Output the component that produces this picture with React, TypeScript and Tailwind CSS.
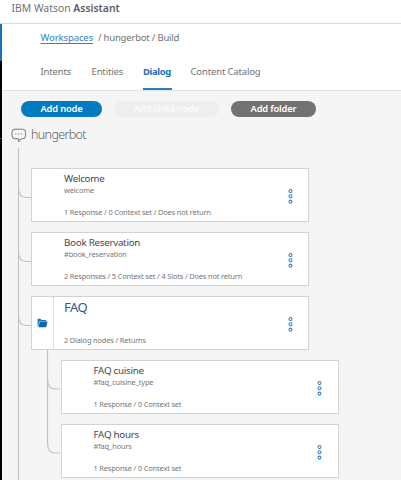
import React from "react";

type NodeProps = {
  title: string;
  condition?: string;
  meta: string;
  folder?: boolean;
};

function Menu() {
  return (
    <svg width="7" height="17" viewBox="0 0 7 17" fill="none" stroke="#3584c4" strokeWidth="1.05">
      <circle cx="3.5" cy="3" r="1.5" />
      <circle cx="3.5" cy="8.3" r="1.5" />
      <circle cx="3.5" cy="13.6" r="1.5" />
    </svg>
  );
}

function FolderIcon() {
  return (
    <svg width="11" height="10" viewBox="0 0 11 10">
      <path d="M.6 8.6V.7h3l.9 1.3h4.7v1.2H2.6L1.1 8.6Z" fill="#1c75b5" />
      <path d="M3 3.6h7.5L9.2 9.3H1.3Z" fill="#0f67ac" />
    </svg>
  );
}

function ChatIcon() {
  return (
    <svg width="16" height="16" viewBox="0 0 16 16" fill="none" stroke="#686868" strokeWidth="0.9">
      <path d="M4 1.2h7.6a3 3 0 0 1 3 3v3.6a3 3 0 0 1-3 3H10.2L7.8 13.8V10.8H4a3 3 0 0 1-3-3V4.2a3 3 0 0 1 3-3Z" />
      <path d="M4.4 6h1M7.3 6h1M10.2 6h1" strokeWidth="1.1" />
    </svg>
  );
}

function NodeCard({ title, condition, meta, folder }: NodeProps) {
  return (
    <div className="flex h-[54px] w-[278px] shrink-0 border border-[#d3d3d3] bg-white">
      <div className={`flex w-[22px] shrink-0 items-center justify-center ${folder ? "border-r border-[#dedede]" : ""}`}>
        {folder && <FolderIcon />}
      </div>
      <div className="flex flex-1 flex-col pl-[10px] whitespace-nowrap">
        {folder ? (
          <div className="mt-[3px] h-[27px] text-[13px] leading-[14px] tracking-[-0.5px] text-[#2c5a89]">{title}</div>
        ) : (
          <>
            <div className="mt-[3px] h-[12px] text-[9.8px] leading-[13px] tracking-[-0.27px] text-[#484848]">{title}</div>
            <div className="mt-px h-[14px] text-[7.4px] leading-[10px] tracking-[-0.12px] text-[#777]">{condition}</div>
          </>
        )}
        <div className="mt-[8px] text-[7.4px] leading-[10px] tracking-[-0.15px] text-[#757575]">{meta}</div>
      </div>
      <div className="mr-[14.5px] flex w-[7px] items-center pt-[2px]">
        <Menu />
      </div>
    </div>
  );
}

export default function App() {
  return (
    <div className="flex h-[480px] w-[401px] flex-col overflow-hidden bg-[#f5f5f5] font-['Noto_Sans',sans-serif] text-[#727272]">
      <header className="flex h-[24px] shrink-0 items-start border-b border-[#dcdcdc] bg-white pt-[2px] pl-[11.5px] text-[10.4px] leading-[13px] whitespace-nowrap">
        <span>IBM Watson&nbsp;</span>
        <span className="font-semibold text-[#5c5c5c]">Assistant</span>
      </header>
      <div className="flex min-h-0 flex-1">
        <div className="w-[1.5px] shrink-0 bg-black">
          <div className="h-[37px] bg-[#1870b8]" />
          <div className="mt-[77px] h-px bg-[#20547f]" />
        </div>
        <div className="flex min-w-0 flex-1 flex-col">
          <div className="flex h-[67px] shrink-0 flex-col border-b border-[#e2e2e2] bg-white pl-[39px] text-[9.5px] leading-[13px] whitespace-nowrap">
            <nav className="mt-[7px] flex h-[13px]">
              <a className="w-[57.5px] tracking-[-0.1px] text-[#3381c4] underline decoration-[0.6px] underline-offset-[1.5px]">Workspaces</a>
              <span className="tracking-[-0.2px]">/ hungerbot / Build</span>
            </nav>
            <nav className="mt-[20.5px] flex h-[26.5px] tracking-[-0.15px]">
              <span className="w-[51px]">Intents</span>
              <span className="w-[51.5px]">Entities</span>
              <span className="mr-[19px] w-[28.5px] border-b-2 border-[#337bb5] font-bold tracking-[-0.4px] text-[#1c70b8]">Dialog</span>
              <span>Content Catalog</span>
            </nav>
          </div>
          <div className="mt-[9.5px] ml-[19.5px] flex h-[16px] shrink-0 text-[9.4px] leading-[15px] font-semibold tracking-[-0.2px] whitespace-nowrap text-white">
            <div className="w-[81px] rounded-full bg-[#047bc0] text-center">Add node</div>
            <div className="ml-[12px] w-[105px] rounded-full bg-[#eeeeee] text-center text-[#fafafa]">Add child node</div>
            <div className="ml-[12px] w-[85px] rounded-full bg-[#727272] text-center">Add folder</div>
          </div>
          <div className="mt-[10.5px] ml-[9.5px] flex h-[21px] shrink-0 items-start">
            <div className="pt-[1px]"><ChatIcon /></div>
            <span className="ml-[4px] text-[12.5px] leading-[16px] font-light tracking-[-0.65px] text-[#5f5f5f]">hungerbot</span>
          </div>
          <div className="flex min-h-0 flex-1">
            <svg className="shrink-0" width="29.5" height="332" viewBox="0 0 29.5 332" fill="none" stroke="#c3c3c3" strokeWidth="1.2">
              <path d="M16.5 0V332M16.5 38.5q0 11 7 11h6M16.5 102.500q0 11 7 11h6M16.500 166.500q0 11 7 11h6" />
            </svg>
            <div className="flex flex-col pt-[20px]">
              <div className="flex flex-col gap-[10px]">
                <NodeCard title="Welcome" condition="welcome" meta="1 Response / 0 Context set / Does not return" />
                <NodeCard title="Book Reservation" condition="#book_reservation" meta="2 Responses / 5 Context set / 4 Slots / Does not return" />
                <NodeCard folder title="FAQ" meta="2 Dialog nodes / Returns" />
              </div>
              <div className="flex">
                <svg className="shrink-0" width="29.5" height="130" viewBox="0 0 29.5 130" fill="none" stroke="#c3c3c3" strokeWidth="1.2">
                  <path d="M16.5 0V92q0 11 7 11h6M16.5 28q0 11 7 11h6" />
                </svg>
                <div className="flex flex-col gap-[10px] pt-[10px]">
                  <NodeCard title="FAQ cuisine" condition="#faq_cuisine_type" meta="1 Response / 0 Context set" />
                  <NodeCard title="FAQ hours" condition="#faq_hours" meta="1 Response / 0 Context set" />
                </div>
              </div>
            </div>
          </div>
        </div>
      </div>
    </div>
  );
}
